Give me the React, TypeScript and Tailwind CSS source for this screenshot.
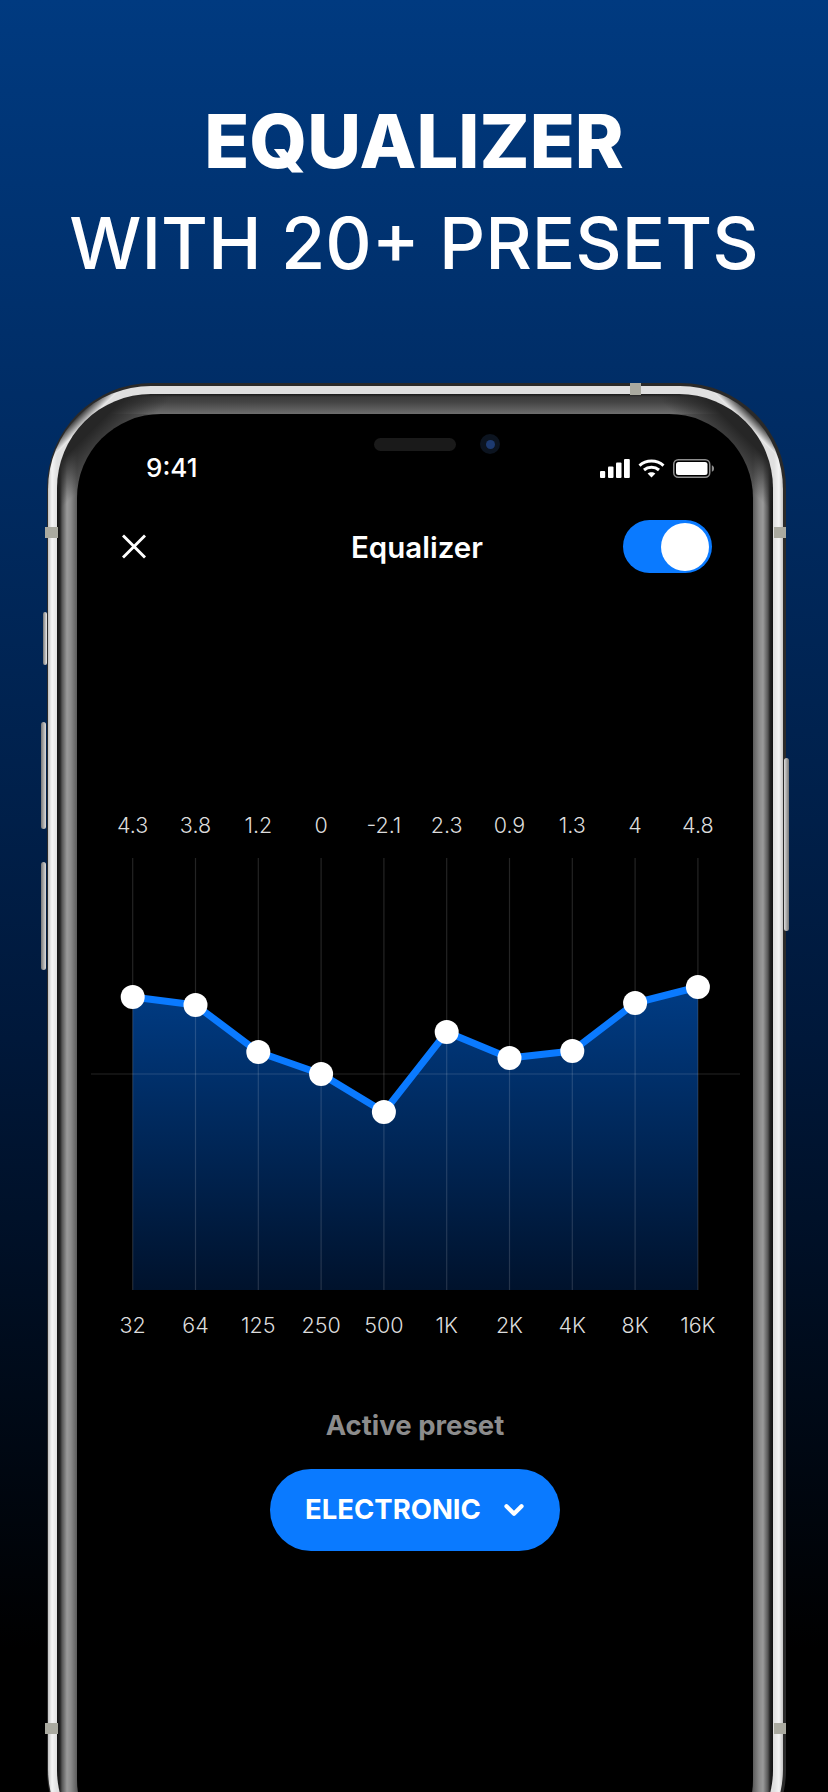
import React from "react";
import { ChevronDown } from "lucide-react";

const INTER = "font-['Inter','Noto_Sans',sans-serif]";

const GAINS = ["4.3", "3.8", "1.2", "0", "-2.1", "2.3", "0.9", "1.3", "4", "4.8"];
const BANDS = ["32", "64", "125", "250", "500", "1K", "2K", "4K", "8K", "16K"];
const POINT_Y = [997, 1005, 1052, 1074, 1112, 1032, 1058, 1051, 1003, 987];
const pointX = (i: number) => 132.7 + 62.8 * i;
const POINTS = POINT_Y.map((y, i) => `${pointX(i)},${y}`).join(" ");

function LabelRow({ items }: { items: string[] }) {
  return (
    <div className="flex h-6 pl-[24.3px] items-center text-[21.5px] leading-6 text-[#dcdcdc] font-light">
      {items.map((t) => (
        <div key={t} className="w-[62.8px] shrink-0 flex justify-center whitespace-nowrap">
          {t}
        </div>
      ))}
    </div>
  );
}

function Chart() {
  return (
    <svg className="block w-[676px] h-[432px]" viewBox="77 858 676 432">
      <defs>
        <linearGradient id="eqFill" gradientUnits="userSpaceOnUse" x1="0" y1="985" x2="0" y2="1290">
          <stop offset="0" stopColor="#003c85" />
          <stop offset="1" stopColor="#00122c" />
        </linearGradient>
      </defs>
      <polygon points={`132.7,1290 ${POINTS} ${pointX(9)},1290`} fill="url(#eqFill)" />
      {POINT_Y.map((_, i) => (
        <line key={i} x1={pointX(i)} x2={pointX(i)} y1="858" y2="1290" stroke="#ffffff" strokeOpacity="0.14" strokeWidth="1.2" />
      ))}
      <line x1="91" x2="740" y1="1074" y2="1074" stroke="#ffffff" strokeOpacity="0.14" strokeWidth="1.2" />
      <polyline points={POINTS} fill="none" stroke="#0a7aff" strokeWidth="7" strokeLinejoin="round" />
      {POINT_Y.map((y, i) => (
        <circle key={i} cx={pointX(i)} cy={y} r="12" fill="#ffffff" />
      ))}
    </svg>
  );
}

function StatusIcons() {
  return (
    <div className="flex items-center gap-[8px] mr-[39px]">
      <svg width="30" height="19" viewBox="0 0 30 19" fill="#ffffff">
        <rect x="0" y="12" width="5.2" height="7" rx="1" />
        <rect x="8" y="7.5" width="5.5" height="11.5" rx="1" />
        <rect x="16" y="3.5" width="5.5" height="15.5" rx="1" />
        <rect x="24" y="0" width="5.8" height="19" rx="1" />
      </svg>
      <svg width="27" height="19" viewBox="0 0 27 19" fill="none" stroke="#ffffff" strokeWidth="3">
        <path d="M1.5 6.6C8.2 .6 18.8 .6 25.5 6.6" />
        <path d="M6 11C10.2 7.4 16.8 7.4 21 11" />
        <path d="M13.5 18.6L9.6 14.6C11.8 12.8 15.2 12.8 17.4 14.6Z" fill="#ffffff" stroke="none" />
      </svg>
      <svg width="41" height="19" viewBox="0 0 41 19">
        <rect x="0.75" y="0.75" width="36" height="17.5" rx="4.5" fill="none" stroke="#8e8e8e" strokeWidth="1.5" />
        <rect x="3" y="3" width="31.5" height="13" rx="2.5" fill="#ffffff" />
        <path d="M38.8 6.2C40.2 6.6 41 7.8 41 9.5S40.2 12.4 38.8 12.8Z" fill="#8e8e8e" />
      </svg>
    </div>
  );
}

export default function App() {
  return (
    <div className={`${INTER} relative w-[828px] h-[1792px] overflow-hidden bg-[linear-gradient(180deg,#003a80_0%,#002d66_22%,#00183a_58%,#000000_92%)] text-white`}>
      {/* Headline */}
      <div className="h-[383px] pt-[91px] text-center leading-[101px] whitespace-nowrap">
        <div className="font-extrabold text-[74px]">EQUALIZER</div>
        <div className="font-medium text-[72px]">WITH 20+ PRESETS</div>
      </div>

      {/* Phone */}
      <div className="relative ml-[47px] w-[739px] h-[1492px]">
        {/* side buttons */}
        <div className="absolute left-[-4px] top-[229px] w-[4px] h-[53px] rounded-sm bg-[linear-gradient(90deg,#777,#eee)]" />
        <div className="absolute left-[-6px] top-[339px] w-[5px] h-[107px] rounded-sm bg-[linear-gradient(90deg,#777,#ddd)]" />
        <div className="absolute left-[-6px] top-[479px] w-[5px] h-[108px] rounded-sm bg-[linear-gradient(90deg,#777,#ddd)]" />
        <div className="absolute right-[-3px] top-[375px] w-[5px] h-[173px] rounded-sm bg-[linear-gradient(90deg,#ddd,#777)]" />

        <div className="h-full rounded-[105px] bg-[#2a2a2a] pt-[3px] pl-[1px] pr-[3px] pb-[3px]">
          {/* steel rim, shaded at the top corners */}
          <div className="h-full rounded-[103px] bg-[linear-gradient(135deg,#2e2e2e_42px,#e8e8e8_53px,transparent_54px),linear-gradient(225deg,#2e2e2e_42px,#e8e8e8_53px,transparent_54px),linear-gradient(90deg,#c4c4c4_0px,#f4f4f4_4px,#e0e0e0_9px,#e0e0e0_calc(100%-9px),#f4f4f4_calc(100%-4px),#c4c4c4_100%)] pt-[8px] pl-[9px] pr-[10px] pb-[8px]">
            {/* inner bezel */}
            <div className="h-full rounded-[94px] bg-[linear-gradient(135deg,#262626_50px,transparent_84px),linear-gradient(225deg,#262626_50px,transparent_84px),linear-gradient(180deg,#1a1a1a_0px,#3c3c3c_3px,#444_8px,#6e6e6e_20px,transparent_20px),linear-gradient(90deg,#111_0px,#222_3px,#555_5px,#9a9a9a_10px,#8a8a8a_14px,#5c5c5c_20px,#5c5c5c_calc(100%-20px),#8a8a8a_calc(100%-14px),#9a9a9a_calc(100%-10px),#555_calc(100%-5px),#222_calc(100%-3px),#111_100%)] pt-[20px] px-[20px]">
              {/* Screen */}
              <div className="relative h-full rounded-[84px] bg-black flex flex-col">
                <div className="h-[24px] mt-[42px] flex items-center justify-between pl-[69px]">
                  <span className="text-[26px] leading-6 font-medium">9:41</span>
                  <StatusIcons />
                </div>

                <div className="mt-[40px] h-[53px] grid grid-cols-[1fr_auto_1fr] items-center pl-[45px] pr-[41px]">
                  <svg width="24" height="25" viewBox="0 0 24 25" stroke="#ffffff" strokeWidth="3" strokeLinecap="square">
                    <path d="M2 2.5L22 22.5M22 2.5L2 22.5" />
                  </svg>
                  <div className="text-[29.5px] leading-8 font-semibold">Equalizer</div>
                  <div className="justify-self-end w-[89px] h-[53px] rounded-full bg-[#0a7aff] flex items-center justify-end pr-[3px]">
                    <div className="w-[48px] h-[48px] rounded-full bg-white" />
                  </div>
                </div>

                <div className="mt-[240px]">
                  <LabelRow items={GAINS} />
                </div>
                <div className="mt-[21px]">
                  <Chart />
                </div>
                <div className="mt-[23px]">
                  <LabelRow items={BANDS} />
                </div>

                <div className="mt-[71px] text-center text-[27.5px] leading-[34px] font-bold text-[#8c8c8c]">
                  Active preset
                </div>
                <div className="mt-[27px] self-center w-[290px] h-[82px] rounded-full bg-[#0a7aff] flex items-center pl-[35px] gap-[18px]">
                  <span className="text-[27.5px] font-bold whitespace-nowrap">ELECTRONIC</span>
                  <ChevronDown size={30} strokeWidth={3.4} />
                </div>
              </div>
            </div>
          </div>
        </div>

        {/* notch speaker and camera */}
        <div className="absolute left-[327px] top-[55px] w-[82px] h-[13px] rounded-full bg-[#1a1a1a]" />
        <div className="absolute left-[433px] top-[51px] w-[20px] h-[20px] rounded-full bg-[#0c1420] flex items-center justify-center">
          <div className="w-[9px] h-[9px] rounded-full bg-[#1d3a70]" />
        </div>

        {/* antenna bands */}
        <div className="absolute left-[-2px] top-[144px] w-[13px] h-[11px] bg-[#aaaaa0]" />
        <div className="absolute right-[0px] top-[144px] w-[12px] h-[11px] bg-[#aaaaa0]" />
        <div className="absolute left-[583px] top-[0px] w-[11px] h-[12px] bg-[#aaaaa0]" />
        <div className="absolute left-[-2px] top-[1340px] w-[13px] h-[11px] bg-[#aaaaa0]" />
        <div className="absolute right-[0px] top-[1340px] w-[12px] h-[11px] bg-[#aaaaa0]" />
      </div>
    </div>
  );
}
